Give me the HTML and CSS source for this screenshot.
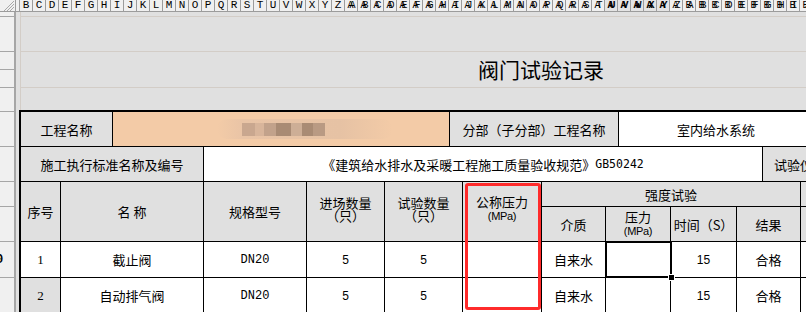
FILE: index.html
```html
<!DOCTYPE html>
<html lang="zh-CN">
<head>
    <meta charset="UTF-8">
    <meta name="viewport" content="width=device-width, initial-scale=1.0">
    <title>阀门试验记录</title>
    <link rel="stylesheet" href="styles.css">
</head>
<body>
<!-- Заголовки столбцов -->
<div class="colhead">
    <div class="corner">
        <svg width="15" height="11" viewBox="0 0 15 11">
            <path d="M14 1 L4 11 M14 4 L7 11 M14 7 L10 11" stroke="#a8a8a8" stroke-width="1" fill="none"/>
        </svg>
    </div>
    <div class="col col-a"></div>
    <div class="col">B</div><div class="col">C</div><div class="col">D</div><div class="col">E</div>
    <div class="col">F</div><div class="col">G</div><div class="col">H</div><div class="col">I</div>
    <div class="col">J</div><div class="col">K</div><div class="col">L</div><div class="col">M</div>
    <div class="col">N</div><div class="col">O</div><div class="col">P</div><div class="col">Q</div>
    <div class="col">R</div><div class="col">S</div><div class="col">T</div><div class="col">U</div>
    <div class="col">V</div><div class="col">W</div><div class="col">X</div><div class="col">Y</div>
    <div class="col">Z</div>
    <div class="col col-2">AA</div><div class="col col-2">AB</div><div class="col col-2">AC</div>
    <div class="col col-2">AD</div><div class="col col-2">AE</div><div class="col col-2">AF</div>
    <div class="col col-2">AG</div><div class="col col-2">AH</div><div class="col col-2">AI</div>
    <div class="col col-2">AJ</div><div class="col col-2">AK</div><div class="col col-2">AL</div>
    <div class="col col-2">AM</div><div class="col col-2">AN</div><div class="col col-2">AO</div>
    <div class="col col-2">AP</div><div class="col col-2">AQ</div><div class="col col-2">AR</div>
    <div class="col col-2">AS</div><div class="col col-2">AT</div>
    <div class="col col-2 col-on">AU</div><div class="col col-2 col-on">AV</div>
    <div class="col col-2 col-on">AW</div><div class="col col-2 col-on">AX</div>
    <div class="col col-2 col-on">AY</div>
    <div class="col col-2">AZ</div><div class="col col-2">BA</div><div class="col col-2">BB</div>
    <div class="col col-2">BC</div><div class="col col-2">BD</div><div class="col col-2">BE</div>
    <div class="col col-2">BF</div><div class="col col-2">BG</div><div class="col col-2">BH</div>
    <div class="col col-2">BI</div><div class="col col-2">BJ</div>
</div>

<div class="main">
    <!-- Заголовки строк -->
    <div class="rowhead">
        <div class="rh rh-5"></div>
        <div class="rh rh-35"></div>
        <div class="rh rh-18"></div>
        <div class="rh rh-18"></div>
        <div class="rh rh-24"></div>
        <div class="rh rh-35"></div>
        <div class="rh rh-35"></div>
        <div class="rh rh-25"></div>
        <div class="rh rh-35"></div>
        <div class="rh rh-36 rh-on"><span>0</span></div>
        <div class="rh rh-36"></div>
    </div>

    <div class="sheet">
        <div class="top-area">
            <div class="band band-5"></div>
            <div class="band band-35"></div>
            <div class="band title">阀门试验记录</div>
            <div class="band band-gap"></div>
        </div>

        <div class="record">
            <!-- строка 1 -->
            <div class="c gray w2">工程名称</div>
            <div class="c peach w4">
                <div class="redact">
                    <span class="px px1"></span><span class="px px2"></span><span class="px px3"></span>
                    <span class="px px4"></span><span class="px px5"></span><span class="px px6"></span>
                    <span class="px px7"></span>
                </div>
            </div>
            <div class="c gray w4">分部（子分部）工程名称</div>
            <div class="c w5">室内给水系统</div>

            <!-- строка 2 -->
            <div class="c gray w3">施工执行标准名称及编号</div>
            <div class="c w10">《建筑给水排水及采暖工程施工质量验收规范》<span class="gb">GB50242</span></div>
            <div class="c gray w2 left">试验仪器及编号</div>

            <!-- шапка -->
            <div class="c gray tall">序号</div>
            <div class="c gray w2 tall">名 称</div>
            <div class="c gray tall">规格型号</div>
            <div class="c gray tall"><div class="stack">进场数量<br>（只）</div></div>
            <div class="c gray w2 tall"><div class="stack">试验数量<br>（只）</div></div>
            <div class="c gray tall"><div class="stack">公称压力<br><span class="unit">(MPa)</span></div></div>
            <div class="c gray w6">强度试验</div>
            <div class="c gray"></div>

            <div class="c gray">介质</div>
            <div class="c gray w2"><div class="stack stack-sm">压力<br><span class="unit">(MPa)</span></div></div>
            <div class="c gray">时间（S）</div>
            <div class="c gray w2">结果</div>
            <div class="c gray"></div>

            <!-- данные -->
            <div class="c serif">1</div>
            <div class="c w2">截止阀</div>
            <div class="c code">DN20</div>
            <div class="c num">5</div>
            <div class="c num w2">5</div>
            <div class="c"></div>
            <div class="c">自来水</div>
            <div class="c w2"></div>
            <div class="c num">15</div>
            <div class="c w2">合格</div>
            <div class="c"></div>

            <div class="c gray serif">2</div>
            <div class="c w2">自动排气阀</div>
            <div class="c code">DN20</div>
            <div class="c num">5</div>
            <div class="c num w2">5</div>
            <div class="c"></div>
            <div class="c">自来水</div>
            <div class="c w2"></div>
            <div class="c num">15</div>
            <div class="c w2">合格</div>
            <div class="c"></div>

            <!-- выделения поверх таблицы -->
            <div class="mark"></div>
            <div class="cursor"><span class="handle"></span></div>
        </div>
    </div>
</div>
</body>
</html>
```

FILE: styles.css
```css
* {
    margin: 0;
    padding: 0;
    box-sizing: border-box;
}
body {
    width: 806px;
    height: 312px;
    overflow: hidden;
    background: #e0e0e0;
    color: #000;
    font-family: "Noto Sans CJK SC", sans-serif;
    font-size: 13px;
}

/* Заголовки столбцов */
.colhead {
    display: flex;
    height: 12px;
    background: #f0f0f0;
    border-bottom: 1px solid #9c9c9c;
    white-space: nowrap;
    overflow: hidden;
}
.corner {
    width: 16px;
    flex: none;
    border-right: 1px solid #9c9c9c;
}
.corner svg {
    display: block;
}
.col {
    width: 13px;
    flex: none;
    border-right: 1px solid #9c9c9c;
    font-family: "Liberation Mono", monospace;
    font-size: 11px;
    line-height: 11px;
    text-align: center;
    overflow: hidden;
}
.col-a {
    width: 4px;
}
.col-2 {
    letter-spacing: -4px;
    text-indent: -3px;
    font-size: 10px;
}
.col-on {
    background: #e4e4e4;
    font-weight: bold;
}

.main {
    display: flex;
}

/* Заголовки строк */
.rowhead {
    width: 16px;
    flex: none;
    background: #f0f0f0;
    border-right: 2px solid #a6a6a6;
}
.rh {
    border-bottom: 1px solid #a6a6a6;
    overflow: hidden;
}
.rh-5 { height: 5px; }
.rh-18 { height: 18px; }
.rh-24 { height: 24px; }
.rh-25 { height: 25px; }
.rh-35 { height: 35px; }
.rh-36 { height: 36px; }
.rh-on {
    display: flex;
    align-items: center;
    font-family: "Liberation Mono", monospace;
    font-weight: bold;
    font-size: 12px;
}
.rh-on span {
    margin-left: -4px;
}

.sheet {
    flex: 1;
    min-width: 0;
    overflow: hidden;
}
.top-area {
    margin-left: 4px;
    width: 1041px;
    border-left: 1px solid #d3cdc7;
}
.band {
    border-bottom: 1px solid #d3cdc7;
}
.band-5 { height: 5px; }
.band-35 { height: 35px; }
.band-gap {
    height: 22px;
    border-bottom: none;
}
.title {
    height: 36px;
    line-height: 35px;
    text-align: center;
    font-size: 21px;
}

/* Таблица записи */
.record {
    position: relative;
    display: grid;
    grid-template-columns: 40px 52px 91px 103px 78px 65px 13px 79px 64px 13px 52px 66px 26px 38px 13px;
    grid-template-rows: 35px 35px 25px 35px 36px 36px;
    width: max-content;
    margin-left: 3px;
    border-left: 2px solid #000;
    border-top: 2px solid #000;
}
.c {
    display: flex;
    align-items: center;
    justify-content: center;
    background: #fff;
    border-right: 1px solid #000;
    border-bottom: 1px solid #000;
    white-space: nowrap;
    overflow: hidden;
    text-align: center;
}
.c.gray { background: #e0e0e0; }
.c.peach {
    background: #f3cba7;
    justify-content: flex-start;
    padding-left: 104px;
}
.c.left {
    justify-content: flex-start;
    padding-left: 11px;
}
.w2 { grid-column: span 2; }
.w3 { grid-column: span 3; }
.w4 { grid-column: span 4; }
.w5 { grid-column: span 5; }
.w6 { grid-column: span 6; }
.w10 { grid-column: span 10; }
.tall { grid-row: span 2; }

.stack {
    line-height: 13px;
    padding-bottom: 6px;
}
.stack-sm {
    line-height: 13px;
    padding-bottom: 1px;
}
.unit {
    font-family: "Liberation Sans", sans-serif;
    font-size: 11px;
    letter-spacing: -0.3px;
}
.serif {
    font-family: "Liberation Serif", serif;
    font-size: 13px;
}
.code {
    font-family: "Liberation Mono", monospace;
    font-size: 12px;
}
.num {
    font-family: "Liberation Sans", sans-serif;
    font-size: 12px;
}
.gb {
    font-family: "DejaVu Sans Mono", monospace;
    font-size: 11.5px;
}

/* Замазанное название */
.redact {
    display: flex;
    align-items: center;
    width: 176px;
    height: 20px;
    padding-left: 25px;
    border-radius: 10px;
    background: linear-gradient(90deg, #f3cba7 0%, #e9c4a6 15%, #e6c2a4 70%, #f3cba7 100%);
}
.px {
    display: block;
    height: 13px;
    filter: blur(0.4px);
}
.px1 { width: 13px; background: #c9a78f; }
.px2 { width: 9px; background: #d8b59b; }
.px3 { width: 12px; background: #c2a28b; }
.px4 { width: 15px; background: #a98b74; }
.px5 { width: 11px; background: #cdae96; }
.px6 { width: 11px; background: #a98b74; }
.px7 { width: 12px; background: #b99a83; }

/* Красная рамка */
.mark {
    position: absolute;
    left: 444px;
    top: 71px;
    width: 76px;
    height: 127px;
    border: 3px solid #ff2b2b;
    border-radius: 3px;
}
/* Активная ячейка */
.cursor {
    position: absolute;
    left: 584px;
    top: 129px;
    width: 67px;
    height: 37px;
    border: 2px solid #000;
}
.handle {
    position: absolute;
    right: -5px;
    bottom: -5px;
    width: 7px;
    height: 7px;
    background: #000;
    border: 1px solid #fff;
}
```
